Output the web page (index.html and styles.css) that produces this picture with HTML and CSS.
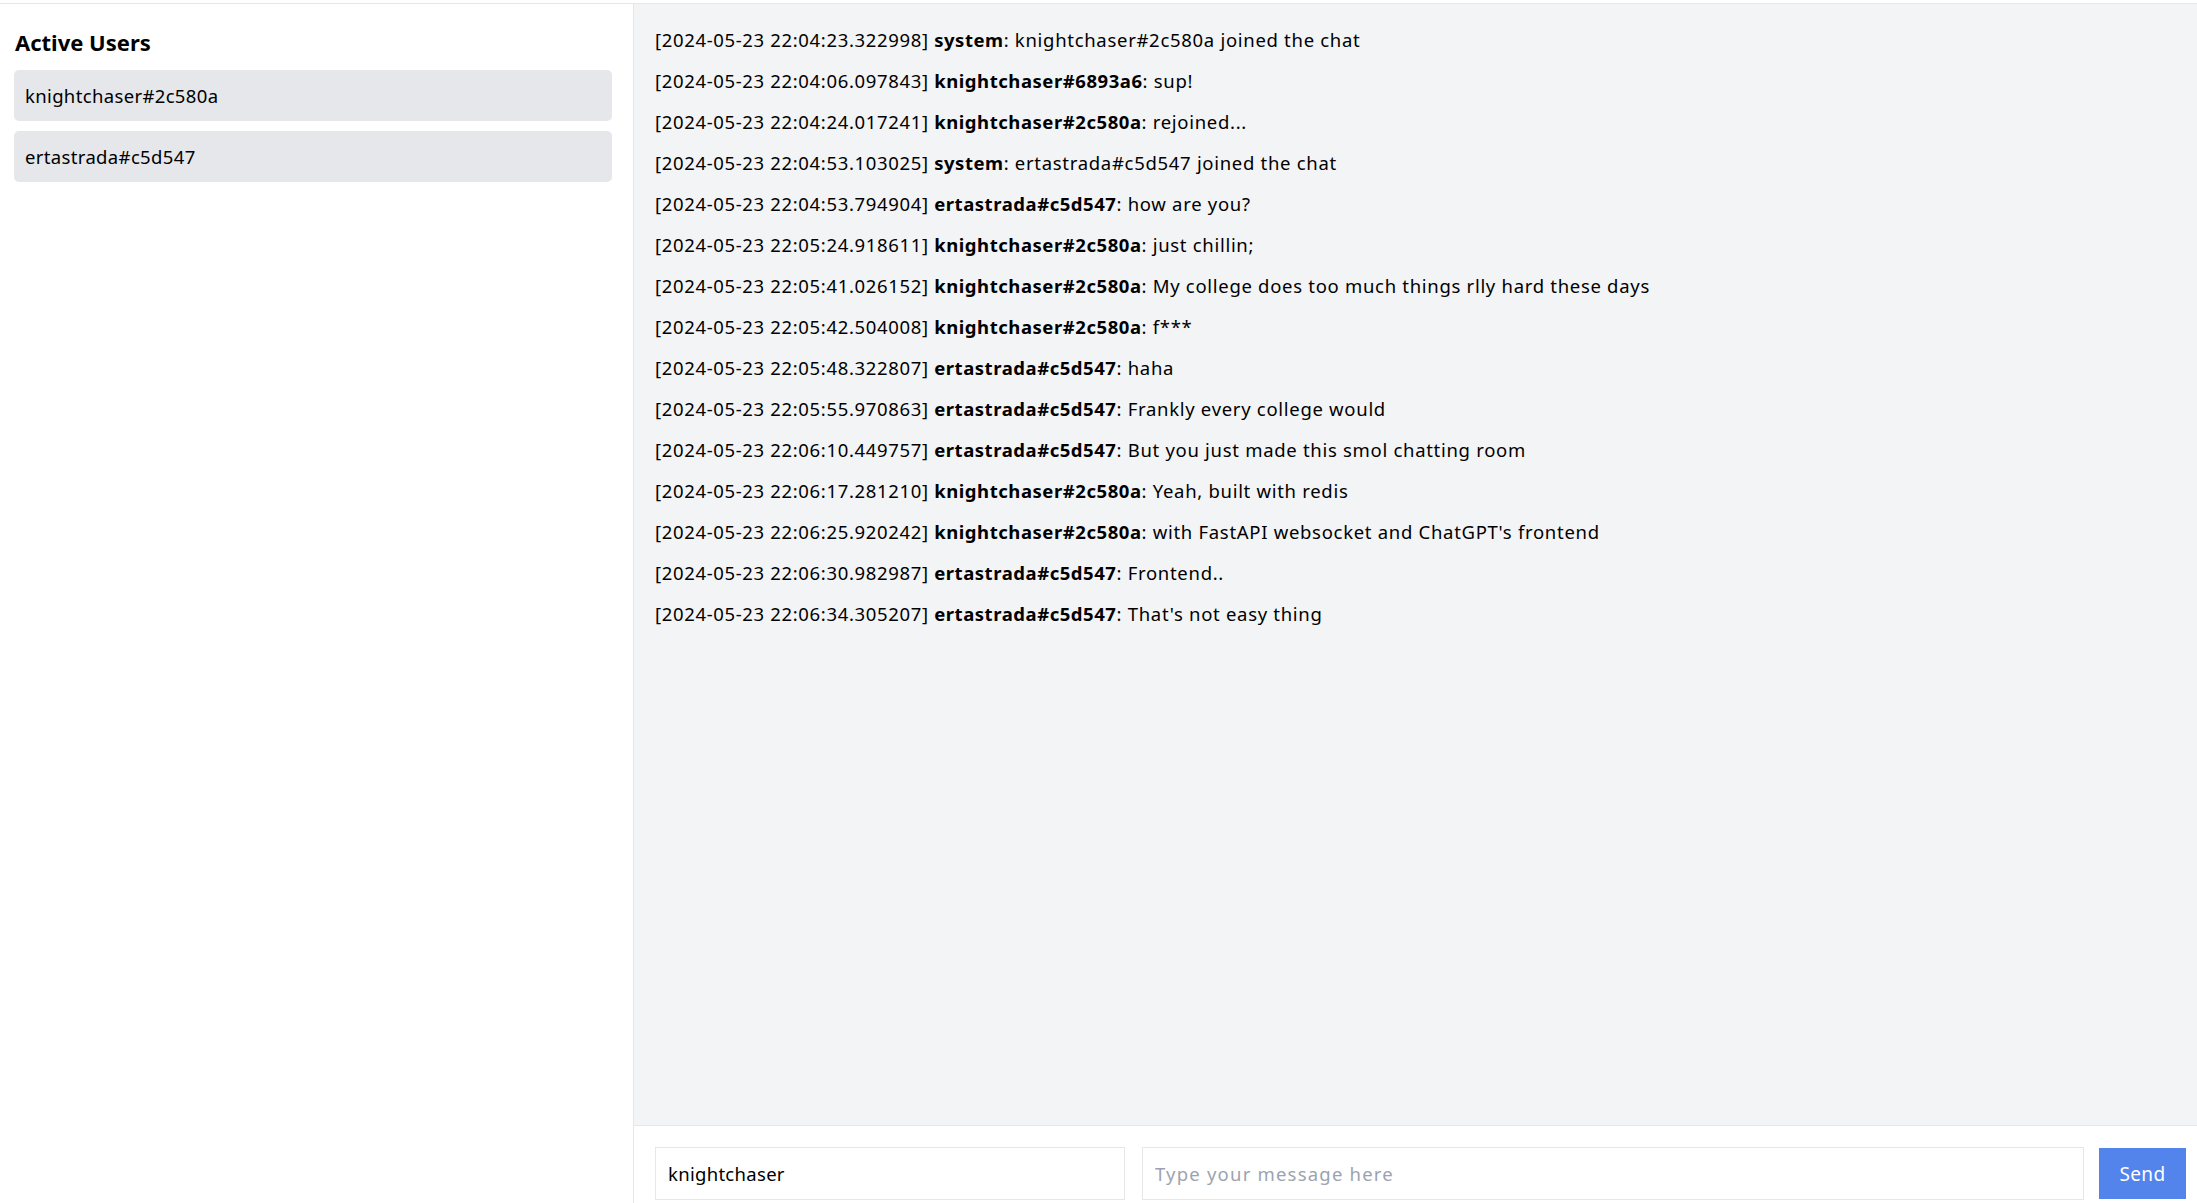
FILE: index.html
```html
<!DOCTYPE html>
<html lang="en">
<head>
<meta charset="utf-8">
<title>Chat</title>
<link rel="stylesheet" href="styles.css">
</head>
<body>
<div class="app">
  <aside class="sidebar">
    <h2 class="sidebar-title">Active Users</h2>
    <ul class="user-list">
      <li class="user-item">knightchaser#2c580a</li>
      <li class="user-item">ertastrada#c5d547</li>
    </ul>
  </aside>
  <main class="chat">
    <div class="messages">
      <div class="msg"><span class="ts">[2024-05-23 22:04:23.322998]</span> <b>system</b>: knightchaser#2c580a joined the chat</div>
      <div class="msg"><span class="ts">[2024-05-23 22:04:06.097843]</span> <b>knightchaser#6893a6</b>: sup!</div>
      <div class="msg"><span class="ts">[2024-05-23 22:04:24.017241]</span> <b>knightchaser#2c580a</b>: rejoined...</div>
      <div class="msg"><span class="ts">[2024-05-23 22:04:53.103025]</span> <b>system</b>: ertastrada#c5d547 joined the chat</div>
      <div class="msg"><span class="ts">[2024-05-23 22:04:53.794904]</span> <b>ertastrada#c5d547</b>: how are you?</div>
      <div class="msg"><span class="ts">[2024-05-23 22:05:24.918611]</span> <b>knightchaser#2c580a</b>: just chillin;</div>
      <div class="msg"><span class="ts">[2024-05-23 22:05:41.026152]</span> <b>knightchaser#2c580a</b>: My college does too much things rlly hard these days</div>
      <div class="msg"><span class="ts">[2024-05-23 22:05:42.504008]</span> <b>knightchaser#2c580a</b>: f***</div>
      <div class="msg"><span class="ts">[2024-05-23 22:05:48.322807]</span> <b>ertastrada#c5d547</b>: haha</div>
      <div class="msg"><span class="ts">[2024-05-23 22:05:55.970863]</span> <b>ertastrada#c5d547</b>: Frankly every college would</div>
      <div class="msg"><span class="ts">[2024-05-23 22:06:10.449757]</span> <b>ertastrada#c5d547</b>: But you just made this smol chatting room</div>
      <div class="msg"><span class="ts">[2024-05-23 22:06:17.281210]</span> <b>knightchaser#2c580a</b>: Yeah, built with redis</div>
      <div class="msg"><span class="ts">[2024-05-23 22:06:25.920242]</span> <b>knightchaser#2c580a</b>: with FastAPI websocket and ChatGPT's frontend</div>
      <div class="msg"><span class="ts">[2024-05-23 22:06:30.982987]</span> <b>ertastrada#c5d547</b>: Frontend..</div>
      <div class="msg"><span class="ts">[2024-05-23 22:06:34.305207]</span> <b>ertastrada#c5d547</b>: That's not easy thing</div>
    </div>
    <form class="composer">
      <input class="field field-name" type="text" value="knightchaser">
      <input class="field field-msg" type="text" placeholder="Type your message here">
      <button class="send" type="button">Send</button>
    </form>
  </main>
</div>
</body>
</html>
```

FILE: styles.css
```css
* { box-sizing: border-box; }
html, body { margin: 0; overflow: hidden; }
body {
  padding-top: 3px;
  background: #ffffff;
  color: #000000;
  font-family: "Noto Sans", "Noto Sans CJK KR", sans-serif;
  font-size: 18.5px;
  letter-spacing: 0.7px;
}
.app {
  display: flex;
  height: 1218px;
  border-top: 1px solid #e5e7eb;
}
.sidebar {
  width: 634px;
  flex: none;
  border-right: 1px solid #e5e7eb;
  padding: 14px 21px 14px 14px;
  background: #fff;
}
.sidebar-title {
  margin: 5px 0 9px 1px;
  font-size: 22px;
  font-weight: 700;
  line-height: 38px;
  letter-spacing: 0;
}
.user-list {
  list-style: none;
  margin: 0;
  padding: 0;
  display: flex;
  flex-direction: column;
  gap: 10px;
}
.user-item {
  background: #e5e7eb;
  border-radius: 5px;
  height: 51px;
  padding: 13px 11px 0;
  line-height: 25px;
  letter-spacing: 0.35px;
}
.chat {
  flex: 1;
  display: flex;
  flex-direction: column;
  min-width: 0;
}
.messages {
  flex: 1;
  background: #f3f4f6;
  padding: 23px 21px;
  display: flex;
  flex-direction: column;
  gap: 16px;
  border-bottom: 1px solid #e5e7eb;
}
.msg {
  line-height: 25px;
  white-space: nowrap;
}
.msg .ts { letter-spacing: 0.65px; }
.msg b { font-weight: 700; letter-spacing: 0.55px; }
.composer {
  flex: none;
  display: flex;
  align-items: center;
  padding: 21px 11px 21px 21px;
  background: #fff;
  margin: 0;
}
.field {
  height: 53px;
  border: 1px solid #e5e7eb;
  border-radius: 0;
  padding: 0 12px;
  font: inherit;
  letter-spacing: 0.3px;
  color: #000;
  background: #fff;
  outline: none;
  min-width: 0;
}
.field::placeholder { color: #9ca3af; letter-spacing: 1.2px; }
.field-name { flex: none; width: 470px; margin-right: 17px; }
.field-msg { flex: 1; margin-right: 15px; }
.send {
  flex: none;
  width: 87px;
  height: 51px;
  border: none;
  border-radius: 0;
  background: #5284ec;
  color: #fff;
  font: inherit;
  font-size: 19px;
  letter-spacing: 0.3px;
  padding: 0;
}
```
